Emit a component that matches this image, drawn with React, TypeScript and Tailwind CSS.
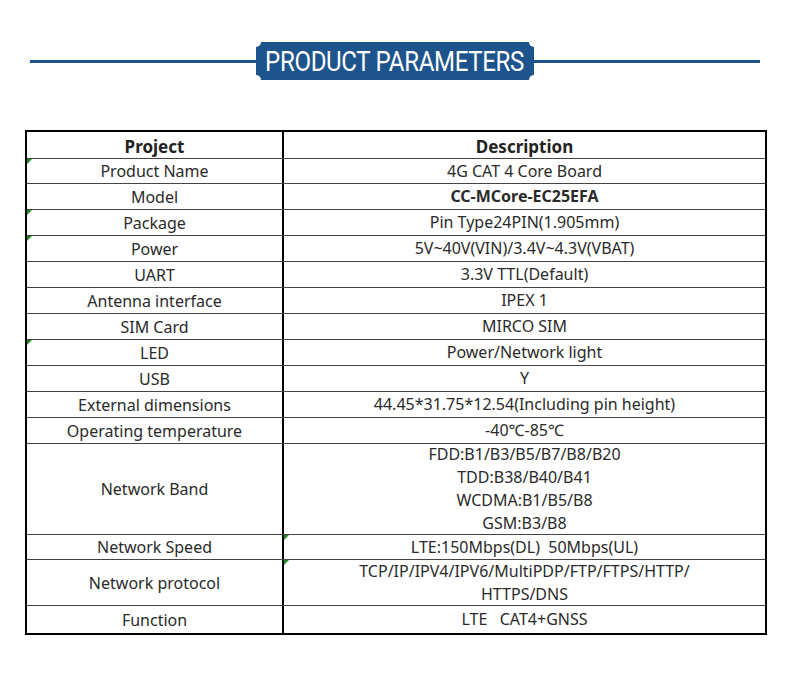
import React from "react";

type Row = { name: string; desc: string[]; bold?: boolean; h: number; mark?: "left" | "mid" };

const rows: Row[] = [
    { name: "Product Name", desc: ["4G CAT 4 Core Board"], h: 25, mark: "left" },
    { name: "Model", desc: ["CC-MCore-EC25EFA"], bold: true, h: 26 },
    { name: "Package", desc: ["Pin Type24PIN(1.905mm)"], h: 26, mark: "left" },
    { name: "Power", desc: ["5V~40V(VIN)/3.4V~4.3V(VBAT)"], h: 26, mark: "left" },
    { name: "UART", desc: ["3.3V TTL(Default)"], h: 26 },
    { name: "Antenna interface", desc: ["IPEX 1"], h: 26 },
    { name: "SIM Card", desc: ["MIRCO SIM"], h: 26 },
    { name: "LED", desc: ["Power/Network light"], h: 26, mark: "left" },
    { name: "USB", desc: ["Y"], h: 26 },
    { name: "External dimensions", desc: ["44.45*31.75*12.54(Including pin height)"], h: 26 },
    { name: "Operating temperature", desc: ["-40℃-85℃"], h: 26 },
    { name: "Network Band", desc: ["FDD:B1/B3/B5/B7/B8/B20", "TDD:B38/B40/B41", "WCDMA:B1/B5/B8", "GSM:B3/B8"], h: 91 },
    { name: "Network Speed", desc: ["LTE:150Mbps(DL)  50Mbps(UL)"], h: 25, mark: "mid" },
    { name: "Network protocol", desc: ["TCP/IP/IPV4/IPV6/MultiPDP/FTP/FTPS/HTTP/", "HTTPS/DNS"], h: 46, mark: "mid" },
    { name: "Function", desc: ["LTE   CAT4+GNSS"], h: 27 },
];

function Mark() {
    return <span className="absolute left-0 top-0 w-0 h-0 border-t-[5px] border-t-[#1f8a1f] border-r-[5px] border-r-transparent" />;
}

export default function App() {
    return (
        <div className="w-[790px] h-[681px] bg-white text-[#222]" style={{ fontFamily: "'Noto Sans', 'Open Sans', sans-serif" }}>
            {/* Title bar */}
            <div className="pt-[42px] px-[30px] flex items-center">
                <div className="flex-1 h-[3px] bg-[#1d548c]" />
                <div className="relative w-[278px] h-[38px] bg-[#1d548c] flex items-center justify-center overflow-hidden">
                    <span className="absolute -left-[5px] -top-[5px] w-[10px] h-[10px] rounded-full bg-white" />
                    <span className="absolute -right-[5px] -top-[5px] w-[10px] h-[10px] rounded-full bg-white" />
                    <span className="absolute -left-[5px] -bottom-[5px] w-[10px] h-[10px] rounded-full bg-white" />
                    <span className="absolute -right-[5px] -bottom-[5px] w-[10px] h-[10px] rounded-full bg-white" />
                    <span
                        className="text-white text-[28px] leading-none tracking-[-0.4px] whitespace-nowrap inline-block scale-x-[0.86] pt-[2px]"
                        style={{ fontFamily: "'Liberation Sans Narrow', Roboto, sans-serif" }}
                    >
                        PRODUCT PARAMETERS
                    </span>
                </div>
                <div className="flex-1 h-[3px] bg-[#1d548c]" />
            </div>

            {/* Table */}
            <div className="ml-[25px] mt-[50px] w-[742px] border-2 border-black">
                <div className="flex h-[27px] border-b border-[#444]">
                    <div className="w-[257px] border-r-2 border-black flex items-center justify-center text-[17px] font-bold pt-[3px]">Project</div>
                    <div className="flex-1 flex items-center justify-center text-[17px] font-bold pt-[3px]">Description</div>
                </div>
                {rows.map((r, i) => (
                    <div
                        key={r.name}
                        className={"flex " + (i < rows.length - 1 ? "border-b border-[#444]" : "")}
                        style={{ height: r.h }}
                    >
                        <div className="relative w-[257px] border-r-2 border-black flex items-center justify-center text-[16px] text-[#2a2a2a]">
                            {r.mark === "left" && <Mark />}
                            {r.name}
                        </div>
                        <div className={"relative flex-1 flex flex-col items-center justify-center text-[16px] leading-[23px] whitespace-pre text-[#2a2a2a] " + (r.bold ? "font-bold" : "")}>
                            {r.mark === "mid" && <Mark />}
                            {r.desc.map((d) => (
                                <span key={d}>{d}</span>
                            ))}
                        </div>
                    </div>
                ))}
            </div>
        </div>
    );
}
